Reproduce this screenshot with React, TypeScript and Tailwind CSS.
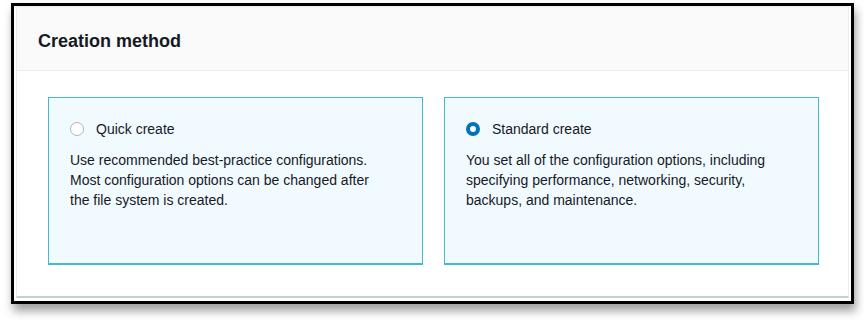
export default function App() {
  return (
    <div className="w-[864px] h-[320px] bg-white pl-[11px] pt-[3px] font-['Liberation_Sans',Arial,sans-serif] text-[#16191f]">
      <div className="w-[843px] h-[301px] border-[3px] border-black bg-white px-[2px] pb-[3px] shadow-[2px_7px_9px_rgba(0,0,0,0.38)]">
        <div className="h-full border border-[#eaeded] border-b-2 border-b-[#c6cfd0] bg-white flex flex-col">
          <div className="h-[64px] bg-[#fafafa] border-b border-[#eaeded] flex items-center pl-[21px] pt-[4px]">
            <h2 className="text-[18px] font-bold leading-[24px]">Creation method</h2>
          </div>
          <div className="grid grid-cols-2 gap-[21px] pl-[31px] pr-[29px] pt-[26px]">
            <Tile
              selected={false}
              label="Quick create"
              lines={[
                'Use recommended best-practice configurations.',
                'Most configuration options can be changed after',
                'the file system is created.',
              ]}
            />
            <Tile
              selected
              label="Standard create"
              lines={[
                'You set all of the configuration options, including',
                'specifying performance, networking, security,',
                'backups, and maintenance.',
              ]}
            />
          </div>
        </div>
      </div>
    </div>
  );
}

function Tile({ selected, label, lines }: { selected: boolean; label: string; lines: string[] }) {
  return (
    <div className="h-[168px] border border-[#44b9d6] border-b-2 bg-[#f1faff] pl-[21px] pt-[21px]">
      <div className="flex items-center gap-[12px] h-[20px]">
        {selected ? (
          <span className="w-[14px] h-[14px] rounded-full border-[4px] border-[#0073bb] bg-white" />
        ) : (
          <span className="w-[14px] h-[14px] rounded-full border-[1.5px] border-[#aab7b8] bg-white" />
        )}
        <span className="text-[14px] leading-[20px]">{label}</span>
      </div>
      <p className="mt-[11px] text-[14px] leading-[20px] whitespace-nowrap">
        {lines.map((l, i) => (
          <span key={i} className="block">
            {l}
          </span>
        ))}
      </p>
    </div>
  );
}
